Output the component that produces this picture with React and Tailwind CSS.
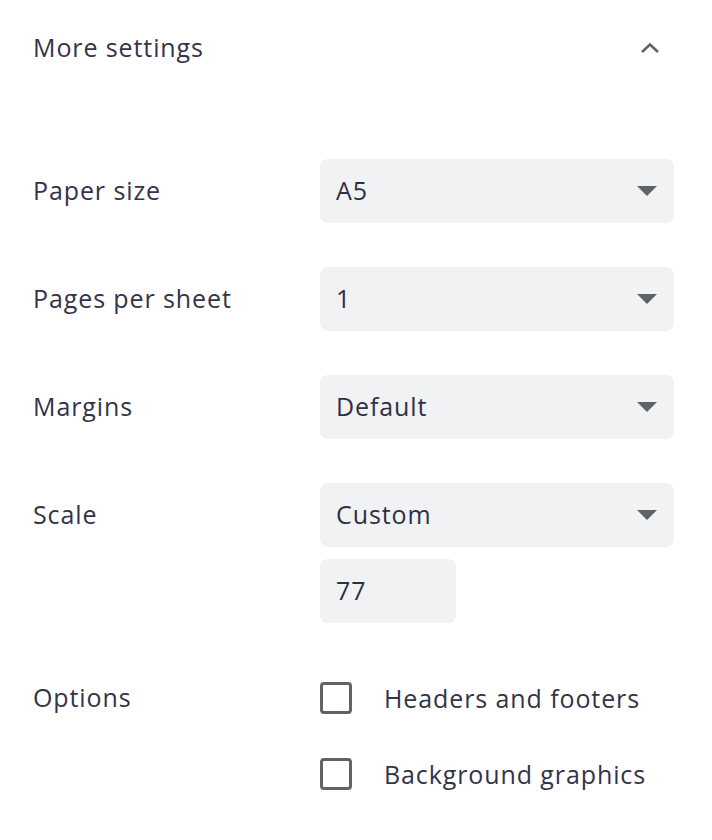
const textFont = { fontFamily: '"Open Sans", "Liberation Sans", sans-serif' };

const Caret = () => (
	<svg viewBox="0 0 20 10" className="h-[10px] w-[20px] text-[#5f6368]" aria-hidden="true">
		<path d="M0 0h20L10 10z" fill="currentColor" />
	</svg>
);

const Select = ({ value }) => (
	<div
		className="flex h-16 w-[354px] items-center justify-between rounded-lg bg-[#f1f2f4] pl-4 pr-[17px] text-[25px] tracking-[0.9px] text-[#2f3044]"
		style={textFont}
	>
		<span>{value}</span>
		<Caret />
	</div>
);

const Label = ({ children, className = "" }) => (
	<span className={`text-[25px] tracking-[0.9px] text-[#33344a] ${className}`} style={textFont}>
		{children}
	</span>
);

const Row = ({ label, children }) => (
	<div className="grid grid-cols-[287px_1fr] items-center">
		<Label>{label}</Label>
		{children}
	</div>
);

const Checkbox = ({ label }) => (
	<label className="flex h-8 items-center gap-8">
		<span className="h-8 w-8 shrink-0 rounded-[4px] border-[3px] border-[#5f6368] bg-white" />
		<Label className="leading-8">{label}</Label>
	</label>
);

export default function App() {
	return (
		<div className="min-h-[840px] w-[712px] bg-white px-[33px]">
			<div className="flex h-24 items-center justify-between">
				<Label>More settings</Label>
				<svg viewBox="0 0 20 12" className="mr-[19px] h-3 w-5 text-[#5f6368]" aria-hidden="true">
					<path d="M2 10l8-7.5 8 7.5" fill="none" stroke="currentColor" strokeWidth="2.6" />
				</svg>
			</div>

			<div className="mt-[63px] flex flex-col gap-[44px]">
				<Row label="Paper size">
					<Select value="A5" />
				</Row>
				<Row label="Pages per sheet">
					<Select value="1" />
				</Row>
				<Row label="Margins">
					<Select value="Default" />
				</Row>
				<div>
					<Row label="Scale">
						<Select value="Custom" />
					</Row>
					<div
						className="mt-3 ml-[287px] flex h-16 w-[136px] items-center rounded-lg bg-[#f1f2f4] pl-4 text-[25px] tracking-[0.9px] text-[#2f3044]"
						style={textFont}
					>
						77
					</div>
				</div>
			</div>

			<div className="mt-[59px] grid grid-cols-[287px_1fr]">
				<Label className="flex h-8 items-center">Options</Label>
				<div className="flex flex-col gap-[44px]">
					<Checkbox label="Headers and footers" />
					<Checkbox label="Background graphics" />
				</div>
			</div>
		</div>
	);
}
